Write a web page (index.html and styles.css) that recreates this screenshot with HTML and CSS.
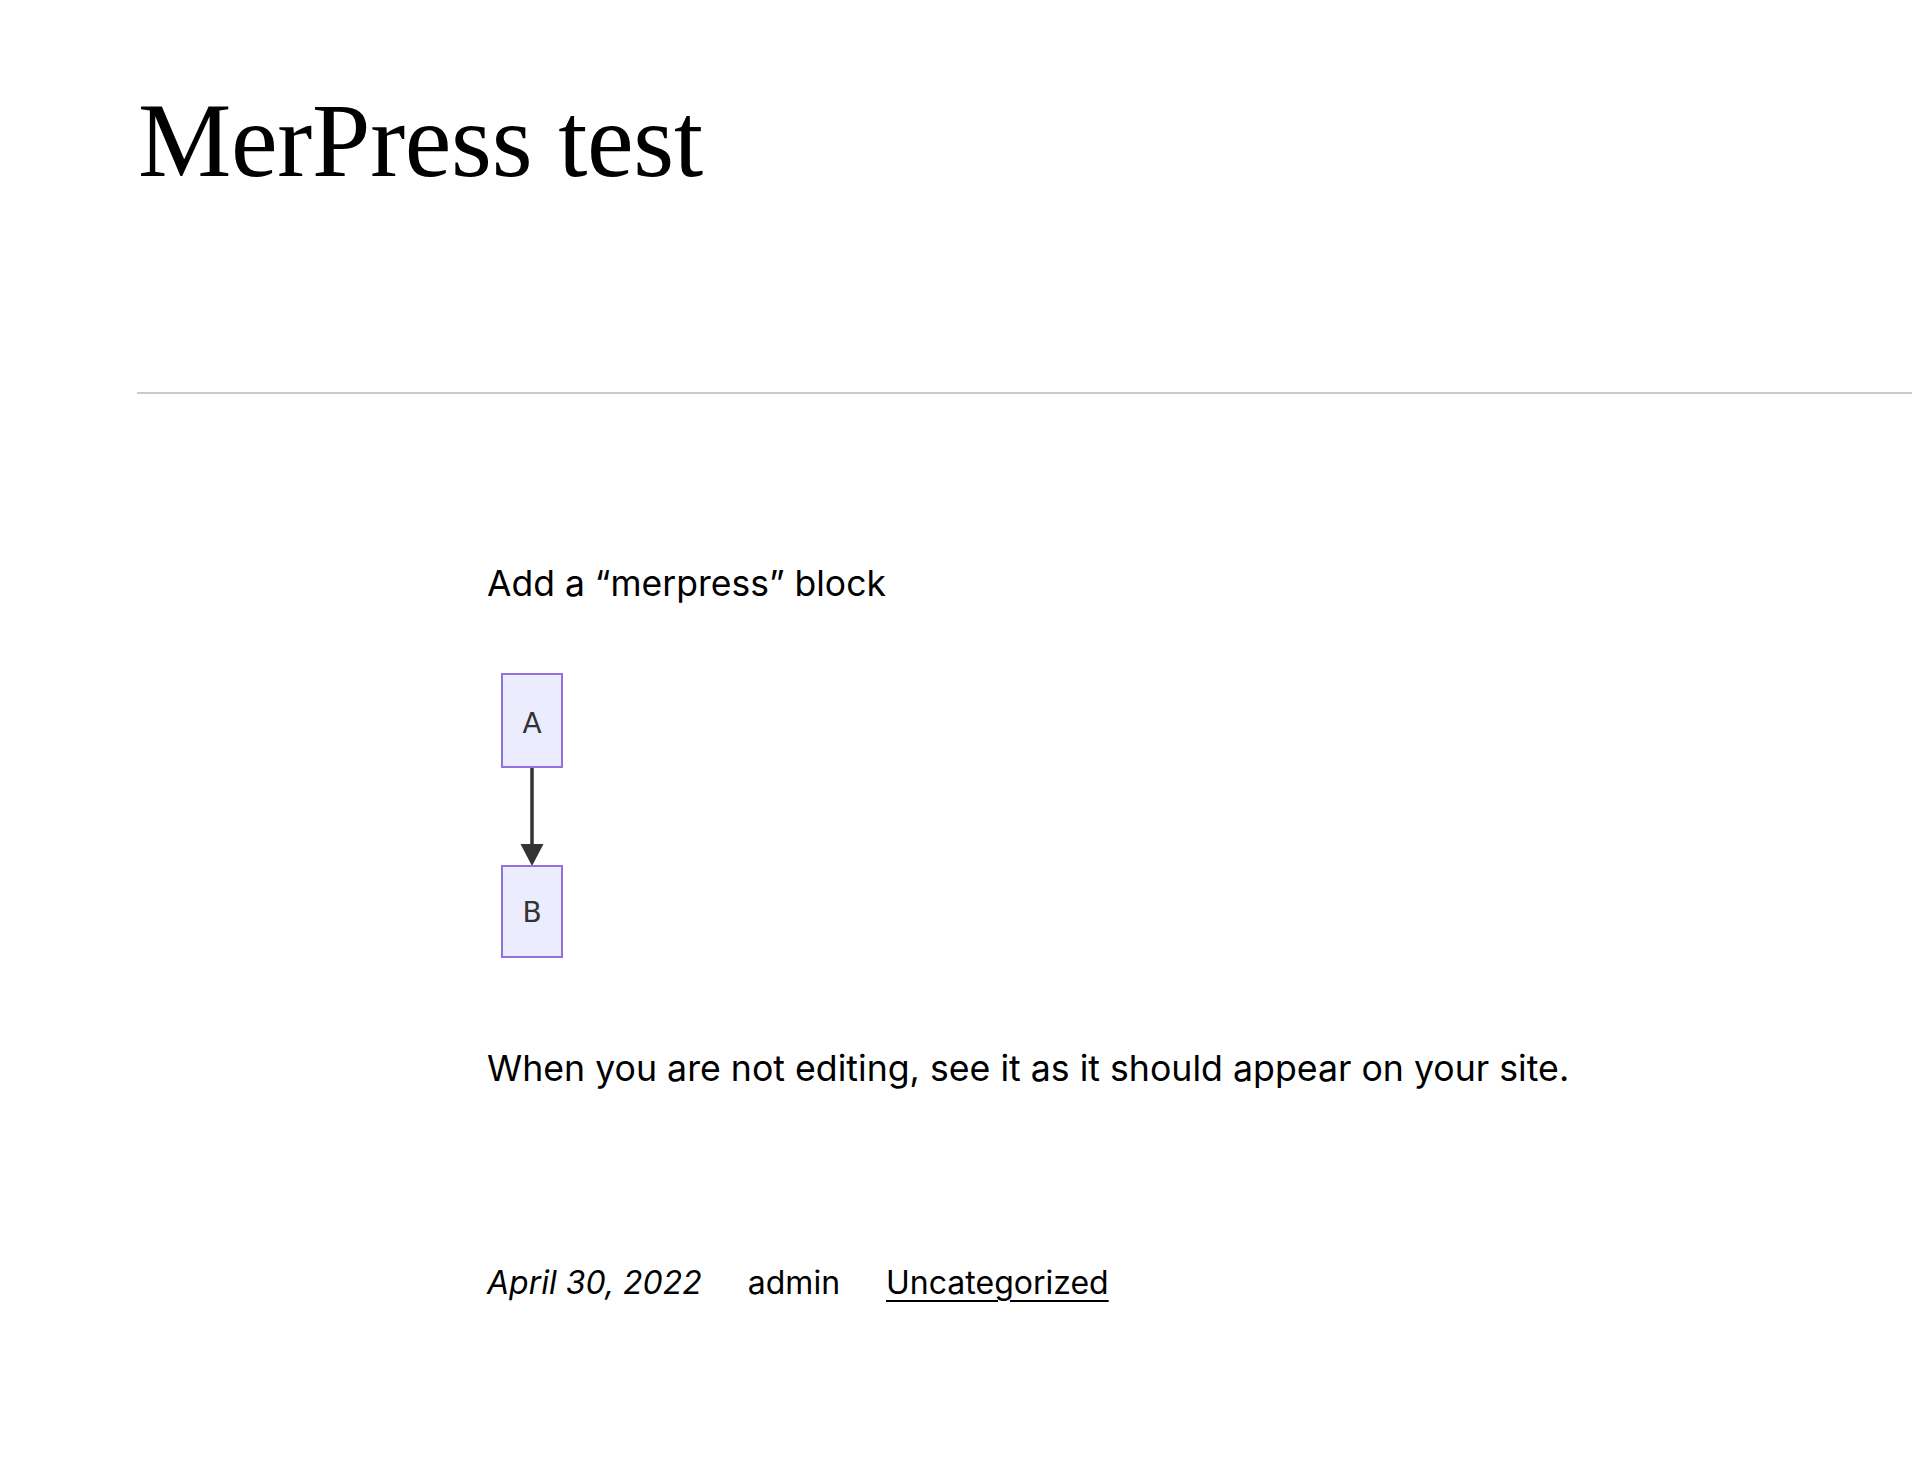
FILE: index.html
```html
<!DOCTYPE html>
<html lang="en">
<head>
<meta charset="utf-8">
<title>MerPress test</title>
<link rel="stylesheet" href="styles.css">
</head>
<body>
<header class="site-header">
  <h1 class="site-title">MerPress test</h1>
</header>
<hr class="separator">
<main class="post">
  <p class="para first">Add a “merpress” block</p>
  <figure class="diagram">
    <svg width="92" height="315" viewBox="0 0 92 315" xmlns="http://www.w3.org/2000/svg">
      <rect x="16" y="16" width="60" height="93" fill="#ECECFF" stroke="#9370DB" stroke-width="2"/>
      <text x="46" y="75" text-anchor="middle" class="node-label">A</text>
      <line x1="46" y1="110" x2="46" y2="188" stroke="#333" stroke-width="3.5"/>
      <polygon points="34.5,186 57.5,186 46,208" fill="#333"/>
      <rect x="16" y="208" width="60" height="91" fill="#ECECFF" stroke="#9370DB" stroke-width="2"/>
      <text x="46" y="264" text-anchor="middle" class="node-label">B</text>
    </svg>
  </figure>
  <p class="para second">When you are not editing, see it as it should appear on your site.</p>
  <footer class="meta">
    <span class="date">April 30, 2022</span>
    <span class="author">admin</span>
    <a class="category" href="#">Uncategorized</a>
  </footer>
</main>
</body>
</html>
```
FILE: styles.css
```css
html, body {
  margin: 0;
  padding: 0;
  background: #fff;
  color: #000;
}
body {
  font-family: Inter, "Noto Sans", sans-serif;
}
.site-header {
  padding: 88px 0 0 138px;
  height: 392px;
  box-sizing: border-box;
}
.site-title {
  margin: 0;
  font-family: "Liberation Serif", serif;
  font-weight: 400;
  font-size: 105px;
  line-height: 1;
  letter-spacing: -0.3px;
}
.separator {
  margin: 0 0 0 137px;
  border: 0;
  height: 2px;
  background: #cccccc;
}
.post {
  padding-left: 487px;
  padding-top: 161px;
}
.para {
  margin: 0;
  font-size: 35.5px;
  line-height: 57.6px;
}
.second {
  font-size: 35.7px;
  margin-top: 67px;
}
.diagram {
  margin: 45px 0 0 -1px;
  line-height: 0;
}
.node-label {
  font-family: "DejaVu Sans", Verdana, sans-serif;
  font-size: 28px;
  fill: #333;
}
.meta {
  display: flex;
  gap: 46px;
  margin-top: 162px;
  font-size: 32px;
  line-height: 48px;
}
.date {
  font-style: italic;
}
.category {
  color: #000;
  text-decoration: underline;
  text-decoration-thickness: 2px;
  text-underline-offset: 6px;
}
```
